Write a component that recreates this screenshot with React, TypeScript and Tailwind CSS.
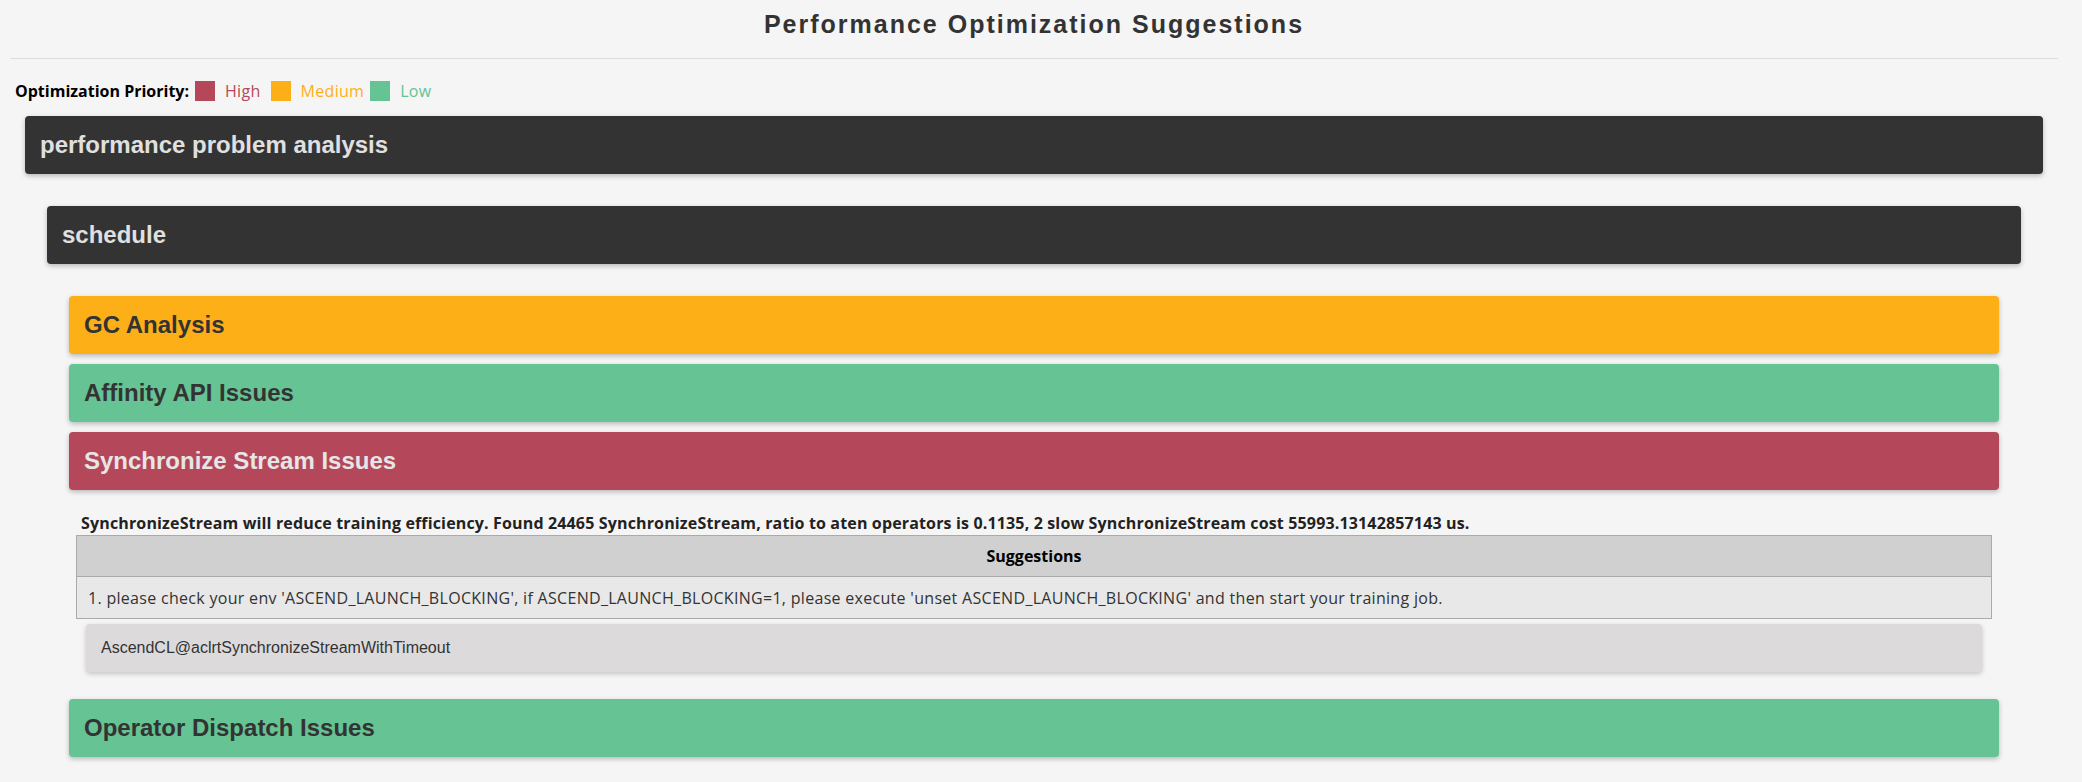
const arial = "font-['Liberation_Sans',Arial,sans-serif]";
const segoe = "font-['Open_Sans','Noto_Sans',sans-serif]";

type Priority = "high" | "medium" | "low" | "none";

const barColors: Record<Priority, string> = {
  high: "bg-[#b4485a] text-[#e6e6e6]",
  medium: "bg-[#fdaf17] text-[#333333]",
  low: "bg-[#65c394] text-[#333333]",
  none: "bg-[#333333] text-[#e0e0e0]",
};

function Bar({ title, priority }: { title: string; priority: Priority }) {
  return (
    <div
      className={`${barColors[priority]} ${arial} rounded-[4px] px-[15px] py-[15px] text-[24px] font-bold leading-[28px] shadow-[0_2px_5px_rgba(0,0,0,0.25)]`}
    >
      {title}
    </div>
  );
}

function Legend() {
  return (
    <div className={`${segoe} flex h-[20px] items-center pl-[5px] text-[16px]`}>
      <span className="font-bold text-black">Optimization Priority:</span>
      <span className="ml-[6px] h-[20px] w-[20px] bg-[#b4485a]" />
      <span className="ml-[10px] tracking-[0.3px] text-[#b4485a]">High</span>
      <span className="ml-[10px] h-[20px] w-[20px] bg-[#fdaf17]" />
      <span className="ml-[10px] tracking-[0.3px] text-[#fdaf17]">Medium</span>
      <span className="ml-[6px] h-[20px] w-[20px] bg-[#65c394]" />
      <span className="ml-[10px] tracking-[0.3px] text-[#65c394]">Low</span>
    </div>
  );
}

function SyncDetails() {
  return (
    <div className="mx-[7px] mt-[23px]">
      <p
        className={`${segoe} mb-[2px] pl-[5px] text-[16px] font-bold leading-[20px] tracking-[0.15px] text-[#222222]`}
      >
        SynchronizeStream will reduce training efficiency. Found 24465 SynchronizeStream, ratio to aten operators
        is 0.1135, 2 slow SynchronizeStream cost 55993.13142857143 us.
      </p>
      <div className={`${segoe} border border-[#aaaaaa] text-[16px]`}>
        <div className="flex h-[41px] items-center justify-center border-b border-[#aaaaaa] bg-[#d0d0d0] font-bold text-black">
          Suggestions
        </div>
        <div className="flex h-[41px] items-center bg-[#e8e8e8] px-[11px] tracking-[0.3px] text-[#333333]">
          1. please check your env 'ASCEND_LAUNCH_BLOCKING', if ASCEND_LAUNCH_BLOCKING=1, please execute 'unset
          ASCEND_LAUNCH_BLOCKING' and then start your training job.
        </div>
      </div>
      <div
        className={`${arial} mx-[10px] mt-[5px] flex h-[48px] items-center rounded-[4px] bg-[#dcdadb] px-[15px] text-[16px] text-[#333333] shadow-[0_2px_5px_rgba(0,0,0,0.2)]`}
      >
        AscendCL@aclrtSynchronizeStreamWithTimeout
      </div>
    </div>
  );
}

export default function App() {
  return (
    <div className="min-h-[782px] bg-[#f5f5f5] pl-[10px] pr-[24px] pt-[9px] pb-[24px]">
      <h1
        className={`${arial} text-center text-[25px] font-bold leading-[30px] tracking-[2px] text-[#333333]`}
      >
        Performance Optimization Suggestions
      </h1>
      <div className="mt-[19px] h-px bg-[#dddddd]" />
      <div className="mt-[22px]">
        <Legend />
      </div>
      <div className="mx-[15px] mt-[15px]">
        <Bar title="performance problem analysis" priority="none" />
        <div className="mx-[22px] mt-[32px]">
          <Bar title="schedule" priority="none" />
          <div className="mx-[22px] mt-[32px] flex flex-col">
            <Bar title="GC Analysis" priority="medium" />
            <div className="mt-[10px]">
              <Bar title="Affinity API Issues" priority="low" />
            </div>
            <div className="mt-[10px]">
              <Bar title="Synchronize Stream Issues" priority="high" />
            </div>
            <SyncDetails />
            <div className="mt-[27px]">
              <Bar title="Operator Dispatch Issues" priority="low" />
            </div>
          </div>
        </div>
      </div>
    </div>
  );
}
